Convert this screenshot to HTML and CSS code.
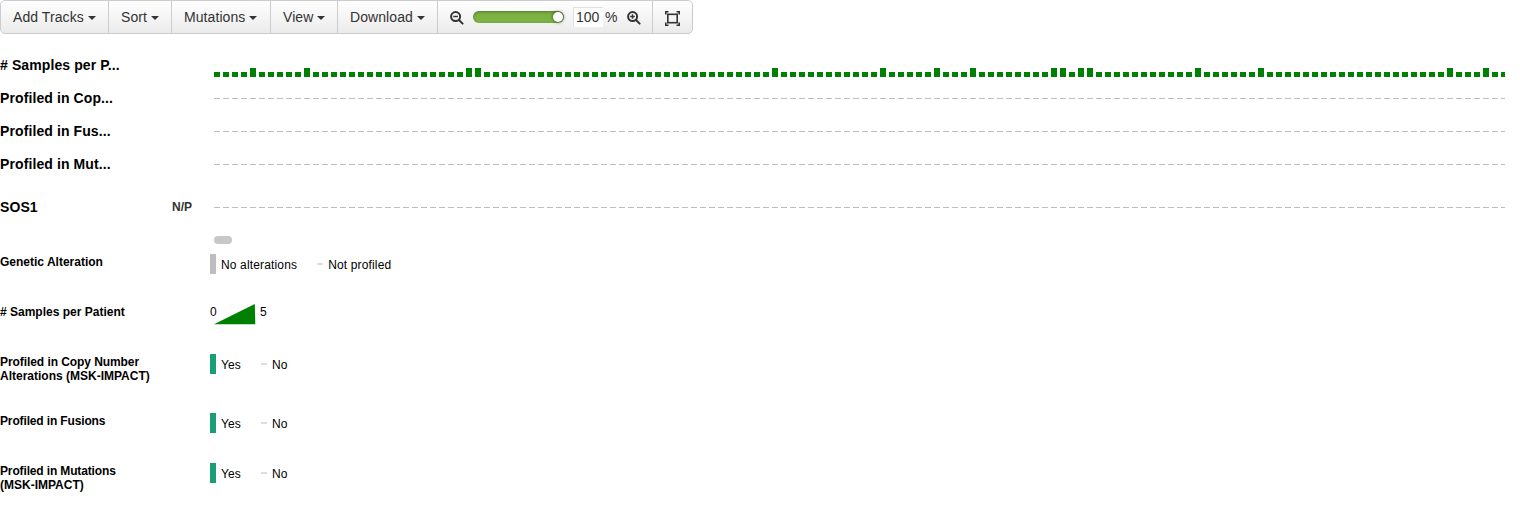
FILE: index.html
```html
<!DOCTYPE html>
<html lang="en">
<head>
<meta charset="utf-8">
<title>Oncoprint</title>
<link rel="stylesheet" href="styles.css">
</head>
<body>
<nav class="toolbar">
  <button class="btn add">Add Tracks<i class="caret"></i></button>
  <button class="btn sort">Sort<i class="caret"></i></button>
  <button class="btn mutations">Mutations<i class="caret"></i></button>
  <button class="btn view">View<i class="caret"></i></button>
  <button class="btn download">Download<i class="caret"></i></button>
  <div class="btn zoom">
    <svg class="lens" width="14" height="14" viewBox="0 0 14 14"><circle cx="5.6" cy="5.6" r="4.5"/><path d="M9 9l3.6 3.6"/><path class="sign" d="M3.3 5.5h4.6"/></svg>
    <div class="slider"><i class="knob"></i></div>
    <span class="value">100</span><span class="percent">%</span>
    <svg class="lens" width="14" height="14" viewBox="0 0 14 14"><circle cx="5.6" cy="5.6" r="4.5"/><path d="M9 9l3.6 3.6"/><path class="sign" d="M3.2 5.5h4.6M5.5 3.2v4.6"/></svg>
  </div>
  <button class="btn fit"><svg class="expand" width="15" height="15" viewBox="0 0 15 15"><rect x="2.8" y="3.3" width="9.4" height="8.4"/><path d="M.8 3.5V.8h2.7M11.5.8h2.7v2.7M.8 11.5v2.7h2.7M11.5 14.2h2.7v-2.7"/></svg></button>
</nav>
<main>
  <section class="tracks">
    <div class="track"><span class="name"># Samples per P...</span>
      <svg class="bars" width="1291" height="9"><defs><pattern id="single" width="9" height="9" patternUnits="userSpaceOnUse"><rect y="4" width="6" height="5"/></pattern></defs><rect width="1291" height="9" fill="url(#single)"/><path d="M36 0h6v9h-6zM90 0h6v9h-6zM252 0h6v9h-6zM261 0h6v9h-6zM558 0h6v9h-6zM666 0h6v9h-6zM720 0h6v9h-6zM756 0h6v9h-6zM837 0h6v9h-6zM846 0h6v9h-6zM864 0h6v9h-6zM873 0h6v9h-6zM981 0h6v9h-6zM1044 0h6v9h-6zM1233 0h6v9h-6zM1269 0h6v9h-6z"/></svg></div>
    <div class="track"><span class="name">Profiled in Cop...</span><i class="dashes"></i></div>
    <div class="track"><span class="name">Profiled in Fus...</span><i class="dashes"></i></div>
    <div class="track"><span class="name">Profiled in Mut...</span><i class="dashes"></i></div>
    <div class="track gene"><span class="name">SOS1</span><span class="rate">N/P</span><i class="dashes"></i></div>
  </section>
  <div class="scrollbar"></div>
  <section class="legend">
    <div class="row"><h3>Genetic Alteration</h3><div class="keys wide"><i class="box gray"></i><span class="yes">No alterations</span><i class="dash"></i><span>Not profiled</span></div></div>
    <div class="row"><h3># Samples per Patient</h3><div class="range"><span>0</span><svg class="ramp" width="42" height="21" viewBox="0 0 42 21"><path d="M0 20.3L40.8 0 41.3 20.3z"/></svg><span>5</span></div></div>
    <div class="row copy"><h3><span class="snug">Profiled in Copy Number</span><br>Alterations (MSK-IMPACT)</h3><div class="keys"><i class="box"></i><span class="yes">Yes</span><i class="dash"></i><span>No</span></div></div>
    <div class="row"><h3 class="tight">Profiled in Fusions</h3><div class="keys"><i class="box"></i><span class="yes">Yes</span><i class="dash"></i><span>No</span></div></div>
    <div class="row"><h3><span class="tight">Profiled in Mutations</span><br>(MSK-IMPACT)</h3><div class="keys"><i class="box"></i><span class="yes">Yes</span><i class="dash"></i><span>No</span></div></div>
  </section>
</main>
</body>
</html>
```
FILE: styles.css
```css
* { box-sizing: border-box; }
body { margin: 0; background: #fff; color: #000; font-family: "Liberation Sans", Arial, sans-serif; overflow: hidden; }

.toolbar { display: flex; width: 693px; height: 34px; border: 1px solid #ccc; border-radius: 5px; background: linear-gradient(#fff, #ebebeb); overflow: hidden; }
.btn { display: flex; align-items: center; flex: none; height: 32px; margin: 0; padding: 0 0 0 12px; border: 0; border-right: 1px solid #ccc; background: none; color: #333; font: 14px/20px "Liberation Sans", Arial, sans-serif; letter-spacing: .08px; white-space: nowrap; }
.add { width: 108px; }
.sort { width: 63px; }
.mutations { width: 99px; }
.view { width: 67px; }
.download { width: 100px; }
.zoom { width: 215px; letter-spacing: 0; }
.fit { width: 39px; border-right: 0; }
.caret { margin: 2px 0 0 4px; border: 4px solid transparent; border-top-color: #333; border-bottom: 0; }
.lens { flex: none; margin-top: 1px; fill: none; stroke: #333; stroke-width: 2; stroke-linecap: round; }
.sign { stroke-width: 1.4; stroke-linecap: butt; }
.slider { display: flex; flex: none; justify-content: flex-end; align-items: center; width: 91px; height: 12px; margin: 0 9px; border-radius: 6px; background: #7cb342; box-shadow: inset 0 1px 3px rgba(0,0,0,.35); }
.knob { width: 10px; height: 10px; margin-right: 1px; border-radius: 50%; background: #fff; box-shadow: 0 0 3px 1px rgba(0,0,0,.35); }
.value { width: 30px; height: 20px; padding-left: 3px; background: #fff; box-shadow: inset 1px 1px 1px #ddd; }
.percent { width: 12px; margin: 0 10px 0 2px; }
.expand { margin-top: 3px; fill: none; stroke: #333; stroke-width: 1.6; }

.tracks { padding-top: 15px; }
.track { display: grid; grid-template-columns: 172px 42px 1291px; align-items: center; height: 33px; }
.name { grid-column: 1; margin-bottom: 2px; font-size: 14px; font-weight: bold; line-height: 16px; letter-spacing: .1px; }
.bars, .dashes { grid-column: 3; }
.bars { display: block; margin-top: 14px; fill: #008000; }
.dashes { height: 1px; background: repeating-linear-gradient(90deg, #bebebe 0 6px, transparent 6px 9px); }
.gene { margin-top: 10px; }
.rate { margin-bottom: 2px; color: #333; font-size: 12px; font-weight: bold; }
.scrollbar { width: 18px; height: 8px; margin: 12px 0 10px 214px; border-radius: 4px; background: #c8c8c8; }

.legend { font-size: 12px; line-height: 14px; }
.row { display: grid; grid-template-columns: 210px auto; align-items: start; height: 50px; }
.copy { height: 59px; }
.row h3 { margin: 1px 0 0; font-size: 12px; line-height: 14px; }
.snug { letter-spacing: -.07px; }
.tight { letter-spacing: -.14px; }
.keys, .range { display: flex; }
.keys { height: 20px; align-items: center; }
.keys span { margin-top: 2px; letter-spacing: .1px; }
.wide span { letter-spacing: .15px; }
.box { width: 6px; height: 20px; margin-right: 5px; background: #1b9e77; }
.gray { background: #bebebe; }
.yes { margin-right: 20px; }
.dash { width: 6px; height: 2px; margin-right: 5px; background: #dedede; }
.range { padding-top: 1px; }
.range span { width: 7px; }
.ramp { margin: -1px 4px 0 -3px; fill: #008000; }
```
